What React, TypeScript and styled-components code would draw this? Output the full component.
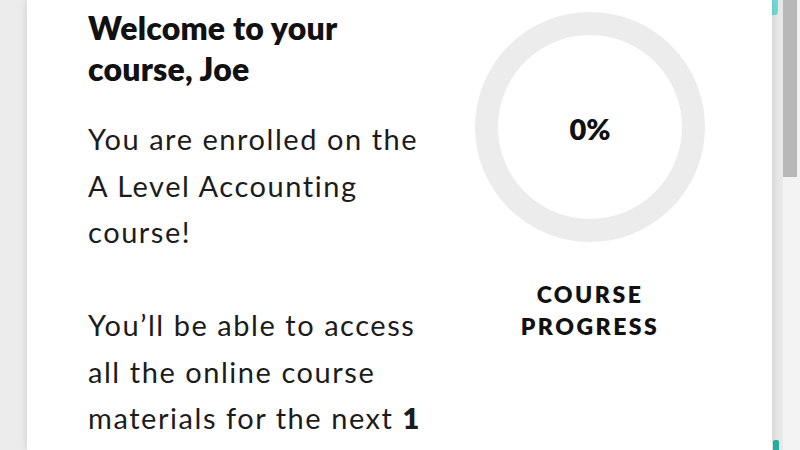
import React from "react";
import styled, { createGlobalStyle } from "styled-components";

const GlobalStyle = createGlobalStyle`
  html, body {
    margin: 0;
    padding: 0;
    width: 800px;
    height: 450px;
    overflow: hidden;
    background: #ededed;
    font-family: "Lato", "Liberation Sans", sans-serif;
    color: #111;
  }
`;

const Page = styled.div`
  display: flex;
  width: 800px;
  height: 450px;
  overflow: hidden;
`;

const Gutter = styled.div`
  width: 27px;
  flex: none;
  background: #ececec;
`;

const Card = styled.main`
  flex: 1;
  position: relative;
  z-index: 1;
  background: #fff;
  box-shadow: 0 0 8px rgba(0, 0, 0, 0.14);
  display: grid;
  grid-template-columns: 352px 300px;
  align-items: start;
  padding: 7px 0 0 61px;
  overflow: hidden;
`;

const TextColumn = styled.section`
  display: flex;
  flex-direction: column;
`;

const Heading = styled.h1`
  margin: 0;
  font-size: 32px;
  font-weight: 800;
  line-height: 41px;
  letter-spacing: 0.2px;
`;

const Body = styled.p<{ $first?: boolean }>`
  margin: ${(p) => (p.$first ? "27px" : "46.5px")} 0 0;
  font-size: 29px;
  font-weight: 400;
  line-height: 46.5px;
  letter-spacing: 1.55px;
  white-space: nowrap;
  color: #1c1c1c;
`;

const Strong = styled.strong`
  font-weight: 800;
  letter-spacing: 0.5px;
`;

const ProgressColumn = styled.aside`
  display: flex;
  flex-direction: column;
  align-items: center;
  padding-top: 5px;
`;

const Ring = styled.div`
  width: 230px;
  height: 230px;
  box-sizing: border-box;
  border: 23px solid #ececec;
  border-radius: 50%;
  display: flex;
  align-items: center;
  justify-content: center;
`;

const Percent = styled.span`
  font-size: 29px;
  font-weight: 800;
  padding-top: 3px;
`;

const Label = styled.div`
  margin-top: 36px;
  max-width: 180px;
  text-align: center;
  font-size: 23px;
  font-weight: 800;
  line-height: 32px;
  letter-spacing: 2.5px;
`;

const Strip = styled.div`
  width: 11px;
  flex: none;
  background: #e8e8e8;
  display: flex;
  flex-direction: column;
  justify-content: space-between;
`;

const Teal = styled.div<{ $dark?: boolean; $h: number }>`
  width: 6px;
  height: ${(p) => p.$h}px;
  background: ${(p) => (p.$dark ? "#1fb3a4" : "#6fdcd8")};
  border-radius: ${(p) => (p.$dark ? "2px 2px 0 0" : "0 0 3px 0")};
  margin-left: ${(p) => (p.$dark ? "1px" : "0")};
`;

const Track = styled.div`
  width: 17px;
  flex: none;
  background: #f3f3f3;
`;

const Thumb = styled.div`
  width: 14px;
  height: 177px;
  background: #b8b8b8;
`;

export default function App() {
  return (
    <>
      <GlobalStyle />
      <Page>
        <Gutter />
        <Card>
          <TextColumn>
            <Heading>Welcome to your course, Joe</Heading>
            <Body $first>
              You are enrolled on the
              <br />A Level Accounting
              <br />
              course!
            </Body>
            <Body>
              You’ll be able to access
              <br />
              all the online course
              <br />
              materials for the next <Strong>1</Strong>
              <br />
              <Strong>year</Strong> to study the course.
            </Body>
          </TextColumn>
          <ProgressColumn>
            <Ring>
              <Percent>0%</Percent>
            </Ring>
            <Label>COURSE PROGRESS</Label>
          </ProgressColumn>
        </Card>
        <Strip>
          <Teal $h={15} />
          <Teal $dark $h={10} />
        </Strip>
        <Track>
          <Thumb />
        </Track>
      </Page>
    </>
  );
}
